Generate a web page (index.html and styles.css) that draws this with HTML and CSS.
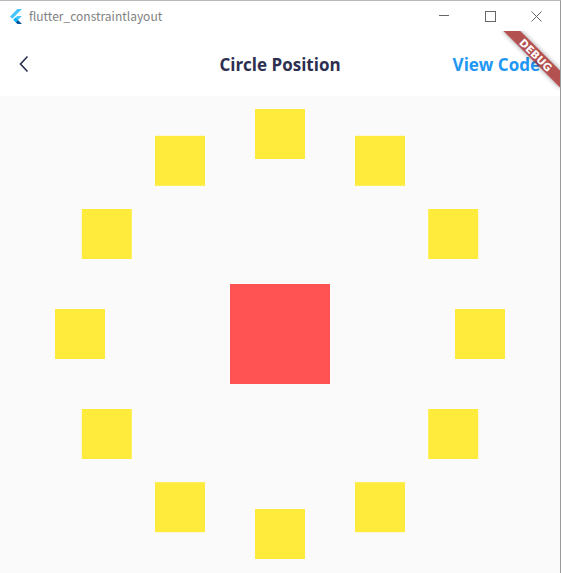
FILE: index.html
```html
<!DOCTYPE html>
<html>
<head>
<meta charset="utf-8">
<link rel="stylesheet" href="styles.css">
</head>
<body>
<div class="window">
  <div class="titlebar">
    <svg class="logo" viewBox="0 0 256 317" width="12" height="15">
      <path fill="#47C5FB" d="M157.666.001L.001 157.666l48.8 48.8L255.267.001zM156.567 145.396L72.149 229.815l48.984 49.716 48.71-48.71 85.425-85.425z"/>
      <path fill="#00569E" d="M121.133 279.531l37.082 37.082h97.052l-85.425-85.792z"/>
      <path fill="#00B5F8" d="M71.6 230.364l48.8-48.801 48.8 48.8-48.8 48.801z"/>
    </svg>
    <span class="wtitle">flutter_constraintlayout</span>
    <div class="controls">
      <svg class="ctl" width="12" height="12" viewBox="0 0 12 12"><path d="M1 5.5h10" stroke="#666" stroke-width="1" fill="none"/></svg>
      <svg class="ctl" width="12" height="12" viewBox="0 0 12 12"><rect x="1.5" y="1.5" width="10" height="10" stroke="#666" stroke-width="1" fill="none"/></svg>
      <svg class="ctl" width="12" height="12" viewBox="0 0 12 12"><path d="M1.5 1.5l10 10M11.5 1.5l-10 10" stroke="#666" stroke-width="1" fill="none"/></svg>
    </div>
  </div>
  <div class="app">
    <header class="appbar">
      <svg class="back" width="14" height="18" viewBox="0 0 14 18"><path d="M9.5 1.5L2.5 9l7 7.5" stroke="#2a2d50" stroke-width="1.6" fill="none"/></svg>
      <h1 class="title">Circle Position</h1>
      <span class="action">View Code</span>
    </header>
    <main class="body">
      <div class="center"></div>
      <div class="node" style="--a:0deg"></div>
      <div class="node" style="--a:30deg"></div>
      <div class="node" style="--a:60deg"></div>
      <div class="node" style="--a:90deg"></div>
      <div class="node" style="--a:120deg"></div>
      <div class="node" style="--a:150deg"></div>
      <div class="node" style="--a:180deg"></div>
      <div class="node" style="--a:210deg"></div>
      <div class="node" style="--a:240deg"></div>
      <div class="node" style="--a:270deg"></div>
      <div class="node" style="--a:300deg"></div>
      <div class="node" style="--a:330deg"></div>
    </main>
    <div class="banner">DEBUG</div>
  </div>
</div>
</body>
</html>
```

FILE: styles.css
```css
html, body {
  margin: 0;
  padding: 0;
  background: #fff;
}
.window {
  width: 560px;
  height: 572px;
  border-top: 1px solid #b8b8b8;
  border-right: 1px solid #9a9a9a;
  border-bottom: 1px solid #9a9a9a;
  display: flex;
  flex-direction: column;
  overflow: hidden;
}
.titlebar {
  height: 30px;
  flex: none;
  display: flex;
  align-items: center;
  background: #fff;
  padding-left: 10px;
}
.logo {
  display: block;
}
.wtitle {
  margin-left: 7px;
  font-family: "Noto Sans CJK SC", "Noto Sans", sans-serif;
  font-size: 12px;
  color: #7f7f7f;
  margin-top: -1px;
}
.controls {
  margin-left: auto;
  display: flex;
  align-items: center;
  gap: 34px;
  margin-right: 18px;
}
.ctl {
  display: block;
}
.app {
  flex: 1;
  position: relative;
  display: flex;
  flex-direction: column;
  overflow: hidden;
}
.appbar {
  height: 65px;
  flex: none;
  background: #fff;
  display: flex;
  align-items: center;
  position: relative;
}
.back {
  display: block;
  margin-left: 18px;
}
.title {
  position: absolute;
  left: 0;
  right: 0;
  top: 0;
  bottom: 0;
  margin: 0;
  display: flex;
  align-items: center;
  justify-content: center;
  font-family: "Open Sans", sans-serif;
  font-weight: 700;
  font-size: 17px;
  color: #2d2f50;
  pointer-events: none;
  padding-top: 1px;
}
.action {
  margin-left: auto;
  margin-right: 20px;
  font-family: "Open Sans", sans-serif;
  font-weight: 700;
  font-size: 17px;
  color: #2196f3;
  padding-top: 1px;
}
.body {
  flex: 1;
  background: #fafafa;
  position: relative;
}
.center {
  position: absolute;
  left: 230px;
  top: 188px;
  width: 100px;
  height: 100px;
  background: #ff5252;
}
.node {
  position: absolute;
  left: 255px;
  top: 213px;
  width: 50px;
  height: 50px;
  background: #ffeb3b;
  transform: rotate(var(--a)) translateY(-200px) rotate(calc(-1 * var(--a)));
}
.banner {
  position: absolute;
  top: 0;
  left: 100%;
  width: 80px;
  height: 12px;
  line-height: 12px;
  background: rgba(160, 38, 38, 0.8);
  box-shadow: 0 0 5px rgba(0, 0, 0, 0.4);
  color: #fff;
  font-family: "DejaVu Sans", sans-serif;
  font-weight: 900;
  font-size: 10.5px;
  text-align: center;
  transform-origin: 0 0;
  transform: rotate(45deg) translate(-40px, 28px);
}
```
